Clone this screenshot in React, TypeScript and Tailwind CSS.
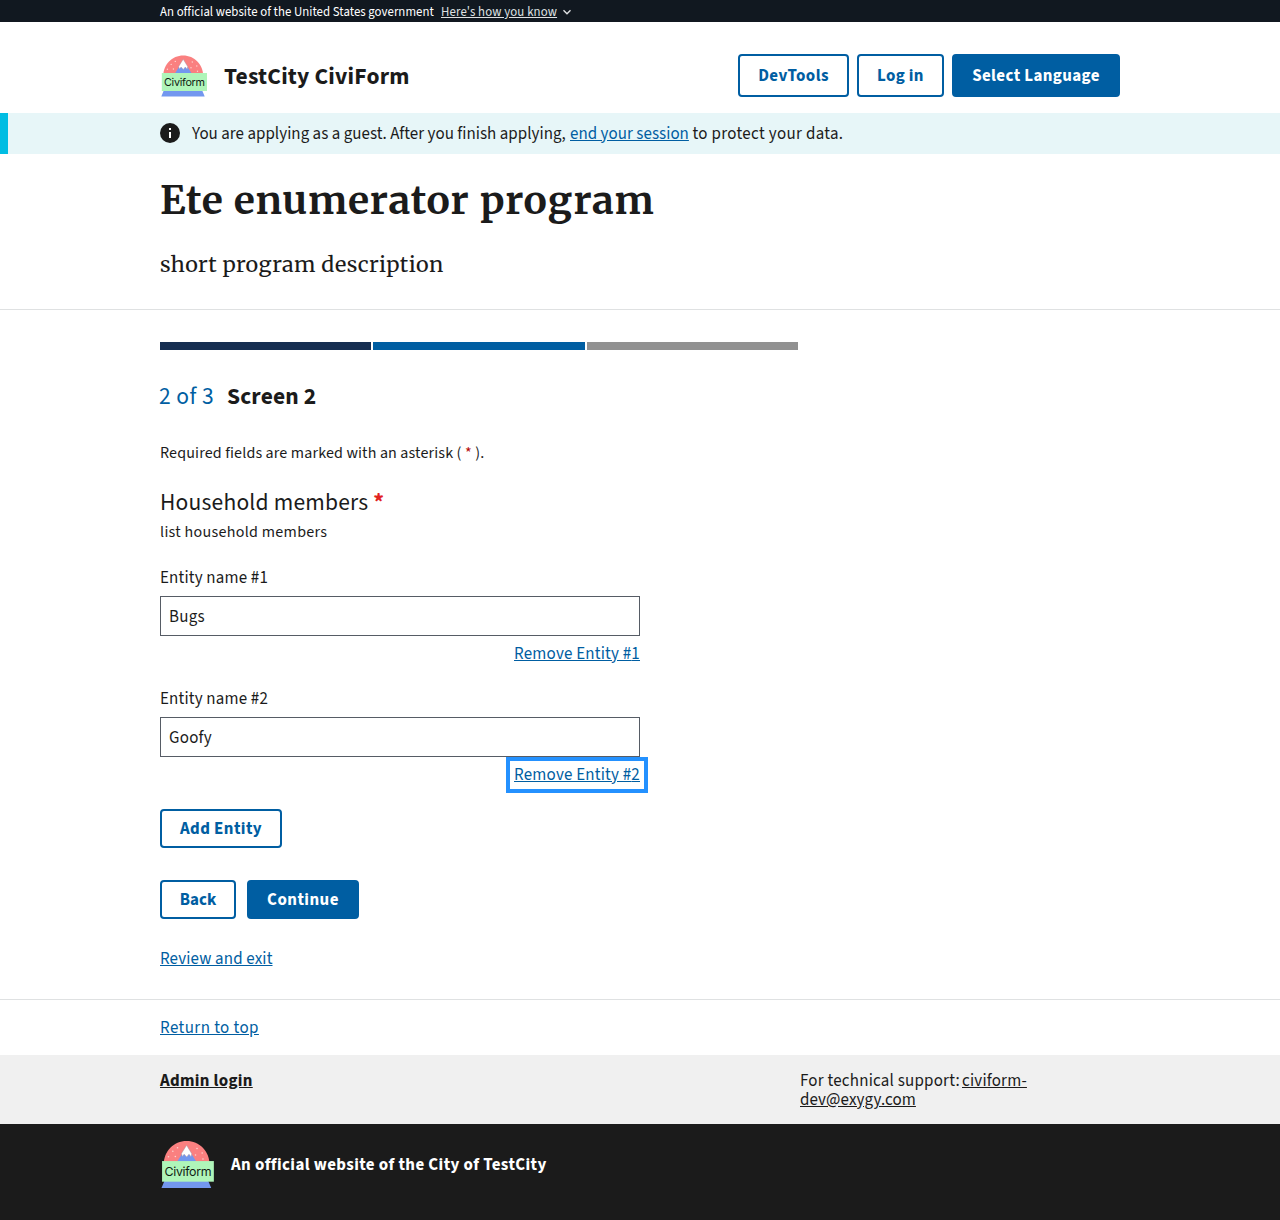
import React from 'react';

function Logo({ className }: { className: string }) {
  return (
    <svg viewBox="0 0 48 48" className={className} aria-label="CiviForm logo">
      <path d="M3.2 24C3.2 12.5 12 3.4 23.2 3.4S43.2 12.5 43.2 24Z" fill="#fa8080" />
      <path d="M14.6 22 23.3 8 32 22Z" fill="#7397ef" />
      <path d="m23.2 7.2 4.5 7.4-.6 2.6-1.8-2.2-2 2.4-2.2-2.4-1.7 2-.7-2.6Z" fill="#fff" stroke="#a88e9a" strokeWidth=".4" />
      <g fill="#fdd3cf">
        <circle cx="15.3" cy="9.4" r=".7" /><circle cx="11.2" cy="12.4" r=".7" />
        <circle cx="7.4" cy="17.2" r=".7" /><circle cx="13.4" cy="17" r=".7" />
        <circle cx="32.3" cy="10" r=".7" /><circle cx="36.8" cy="14" r=".7" />
        <circle cx="31" cy="15.7" r=".7" /><circle cx="37.5" cy="19.2" r=".7" />
      </g>
      <path d="M4.4 37h37.2l3.1 7.6H1.3Z" fill="#7397ef" />
      <rect x="1.8" y="21" width="45.2" height="18" fill="#aff5b9" />
      <text x="4" y="34" fontSize="10.8" textLength="41" fill="#111c14" fontFamily="Inter, 'Liberation Sans', sans-serif">Civiform</text>
    </svg>
  );
}

function Button({ children, className, filled }: { children: React.ReactNode; className: string; filled?: boolean }) {
  return (
    <button
      className={
        (filled ? 'bg-[#005ea2] text-white ' : 'bg-white text-[#005ea2] ') +
        'flex items-center justify-center rounded border-2 border-[#005ea2] font-bold whitespace-nowrap ' +
        className
      }
    >
      {children}
    </button>
  );
}

function Entity({ index, value, focused }: { index: number; value: string; focused?: boolean }) {
  return (
    <div className="h-[121px] w-[480px]">
      <label className="block h-[29px] leading-[22px] tracking-[0.17px]">Entity name #{index}</label>
      <div className="flex h-10 items-center border border-[#565c65] px-2 pt-px tracking-[0.28px]">{value}</div>
      <div className="flex justify-end">
        <button
          className={
            (focused ? 'outline-4 outline-[#2491ff] ' : '') +
            'ml-auto mt-1 -mr-1 h-7 px-1 tracking-[0.21px] text-[#005ea2] underline'
          }
        >
          Remove Entity #{index}
        </button>
      </div>
    </div>
  );
}

export default function App() {
  return (
    <div className="h-[1220px] overflow-hidden bg-white font-['Source_Sans_3','Noto_Sans_CJK_SC',sans-serif] text-[16.96px] leading-[22px] text-[#1b1b1b]">
      <div className="flex h-[22px] items-center bg-[#111820] px-40 pt-0.5 text-[12.8px] leading-5 text-white">
        <span className="w-[281px] tracking-[0.04px] whitespace-nowrap">An official website of the United States government</span>
        <button className="flex items-center text-[#dfe1e2]">
          <span className="tracking-[0.13px] underline">Here's how you know</span>
          <svg viewBox="0 0 10 8" className="ml-[5px] h-2 w-2.5"><path d="m1.5 2.2 3.5 3.5 3.5-3.5" fill="none" stroke="currentColor" strokeWidth="1.4" /></svg>
        </button>
      </div>

      <header className="flex h-[91px] items-start justify-between px-40 pt-8">
        <div className="flex h-[43px] items-center">
          <Logo className="h-12 w-12" />
          <span className="ml-4 pt-0.5 text-[23.5px] font-bold tracking-[0.22px]">TestCity CiviForm</span>
        </div>
        <div className="flex gap-2">
          <Button className="h-[43px] w-[111px] tracking-[0.44px]">DevTools</Button>
          <Button className="h-[43px] w-[87px] tracking-[0.35px]">Log in</Button>
          <Button filled className="h-[43px] w-[168px] tracking-[0.38px]">Select Language</Button>
        </div>
      </header>

      <div className="flex h-[41px] items-center border-l-8 border-[#00bde3] bg-[#e7f6f8] pl-[152px] whitespace-nowrap">
        <svg viewBox="0 0 20 20" className="mr-3 mb-px h-5 w-5"><circle cx="10" cy="10" r="10" fill="#1b1b1b" /><path d="M9 5h2v2H9zM9 9h2v6H9z" fill="#fff" /></svg>
        <span className="w-[378px] tracking-[0.03px]">You are applying as a guest. After you finish applying,</span>
        <a className="w-[122.5px] tracking-[0.04px] text-[#005ea2]"><span className="underline">end your session</span></a>
        <span className="tracking-[0.33px]">to protect your data.</span>
      </div>

      <section className="h-[156px] border-b border-[#dfe1e2] px-40 pt-[23px] font-['Merriweather','Noto_Serif',serif]">
        <h1 className="text-[39.04px] leading-[48px] font-bold tracking-[0.86px] whitespace-nowrap">Ete enumerator program</h1>
        <p className="mt-4 text-[21.6px] leading-[48px] tracking-[0.37px]">short program description</p>
      </section>

      <main className="h-[690px] border-b border-[#dfe1e2] px-40 pt-8">
        <div className="flex h-2 w-[638px] gap-0.5">
          <div className="flex-1 bg-[#162e51]" />
          <div className="flex-1 bg-[#005ea2]" />
          <div className="flex-1 bg-[#919191]" />
        </div>
        <h2 className="mt-[33px] flex h-7 items-center text-[23.5px]">
          <span className="-ml-px w-[68px] tracking-[0.45px] text-[#005ea2]">2 of 3</span>
          <span className="font-bold tracking-[0.15px]">Screen 2</span>
        </h2>
        <p className="mt-[31px] h-[22px] text-[16px] tracking-[0.15px] whitespace-nowrap">
          Required fields are marked with an asterisk ( <span className="text-[#b50909]">*</span> ).
        </p>
        <div className="mt-[23px] h-8 text-[23.5px] leading-8 tracking-[0.21px]">
          Household members <span className="font-bold text-[#e2231f]">*</span>
        </div>
        <p className="mt-0.5 mb-6 h-[22px] text-[16px] tracking-[0.3px]">list household members</p>
        <Entity index={1} value="Bugs" />
        <Entity index={2} value="Goofy" focused />
        <Button className="h-[39px] w-[122px] tracking-[0.41px]">Add Entity</Button>
        <div className="mt-8 flex gap-[11px]">
          <Button className="h-[39px] w-[76px]">Back</Button>
          <Button filled className="h-[39px] w-[112px] tracking-[0.45px]">Continue</Button>
        </div>
        <a className="mt-[29px] block tracking-[0.14px] text-[#005ea2] underline">Review and exit</a>
      </main>

      <div className="flex h-[55px] items-center px-40">
        <a className="tracking-[0.43px] text-[#005ea2] underline">Return to top</a>
      </div>
      <div className="flex h-[69px] bg-[#f0f0f0] px-40 pt-[17px] leading-[19px]">
        <a className="w-[640px] font-bold tracking-[0.31px] underline">Admin login</a>
        <div className="w-[240px]">
          <div className="flex whitespace-nowrap">
            <span className="w-[162px] tracking-[0.22px]">For technical support:</span>
            <a className="tracking-[0.2px] underline">civiform-</a>
          </div>
          <a className="tracking-[0.1px] underline">dev@exygy.com</a>
        </div>
      </div>
      <footer className="flex h-24 items-start bg-[#1b1b1b] px-40 pt-[13px] text-white">
        <Logo className="h-[55px] w-[55px]" />
        <span className="mt-[17px] ml-4 font-bold tracking-[0.39px]">An official website of the City of TestCity</span>
      </footer>
    </div>
  );
}
